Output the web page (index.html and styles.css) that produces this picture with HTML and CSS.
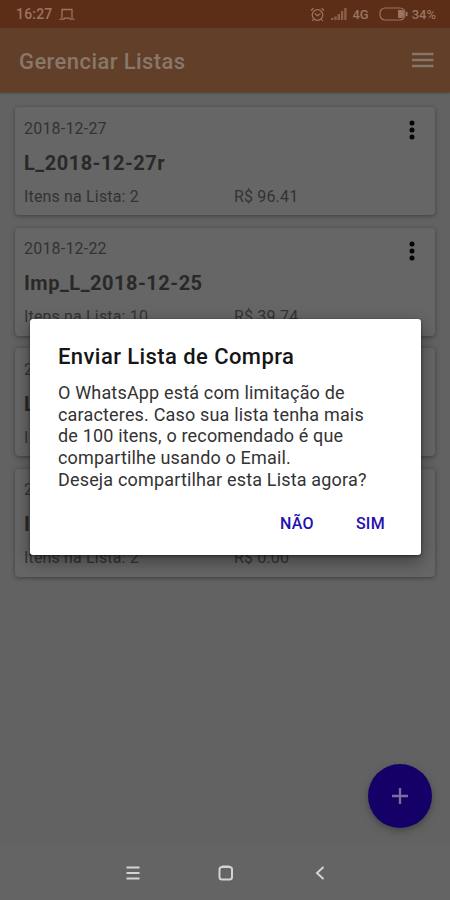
FILE: index.html
```html
<!DOCTYPE html>
<html lang="pt-BR">
<head>
<meta charset="utf-8">
<title>Gerenciar Listas</title>
<link rel="stylesheet" href="styles.css">
</head>
<body>
<div class="screen">
  <header class="status">
    <span class="clock">16:27</span>
    <svg class="laptop" width="16" height="13" viewBox="0 0 16 13"><path d="M3 10V1.500h10V10M.5 11.200h4.200l1-1h4.600l1 1h4.200"/></svg>
    <div class="indicators">
      <svg class="alarm" width="15" height="15" viewBox="0 0 15 15"><circle cx="7.500" cy="8" r="5.300"/><path d="M1 3.500 3.500 1.200M14 3.500 11.500 1.200M4.800 6.500l2.700 2.200 3-2.200M3.600 12.300l-1.300 1.500M11.400 12.300l1.300 1.500"/></svg>
      <svg class="signal" width="16" height="12" viewBox="0 0 16 12"><path d="M0 10h2.400v2H0zM3.300 8.500h2.400V12H3.300zM6.600 6H9V12H6.600zM9.900 3h2.400v9H9.900zM13.200 0h2.400v12h-2.400z"/></svg>
      <span class="network">4G</span>
      <svg class="battery" width="29" height="14" viewBox="0 0 29 14"><rect class="outline" x="1" y="1" width="25" height="12" rx="5"/><path class="charge" d="M19 3h4a3 3 0 0 1 2 3v2a3 3 0 0 1-2 3h-4zM27 5h1.500v4H27z"/></svg>
      <span class="percent">34%</span>
    </div>
  </header>
  <div class="appbar">
    <h1>Gerenciar Listas</h1>
    <svg width="22" height="16" viewBox="0 0 22 16"><path d="M0 2h21.500M0 8h21.500M0 14h21.500"/></svg>
  </div>
  <main class="lists">
    <article class="card">
      <div class="date">2018-12-27</div><h2>L_2018-12-27r</h2>
      <div class="totals"><span>Itens na Lista: 2</span><span>R$ 96.41</span></div>
      <svg class="more" width="6" height="20" viewBox="0 0 6 20"><circle cx="3" cy="3" r="2.500"/><circle cx="3" cy="10" r="2.500"/><circle cx="3" cy="17" r="2.500"/></svg>
    </article>
    <article class="card">
      <div class="date">2018-12-22</div><h2>Imp_L_2018-12-25</h2>
      <div class="totals"><span>Itens na Lista: 10</span><span>R$ 39.74</span></div>
      <svg class="more" width="6" height="20" viewBox="0 0 6 20"><circle cx="3" cy="3" r="2.500"/><circle cx="3" cy="10" r="2.500"/><circle cx="3" cy="17" r="2.500"/></svg>
    </article>
    <article class="card">
      <div class="date">2</div><h2>L</h2>
      <div class="totals"><span>I</span></div>
    </article>
    <article class="card">
      <div class="date">2</div><h2>I</h2>
      <div class="totals"><span>Itens na Lista: 2</span><span>R$ 0.00</span></div>
    </article>
  </main>
  <nav class="navbar">
    <svg width="14" height="14" viewBox="0 0 14 14"><path d="M.5 1.500h13M.5 7h13M.5 12.500h13"/></svg>
    <svg class="home" width="16" height="16" viewBox="0 0 16 16"><rect x="1.500" y="2" width="12.500" height="12.500" rx="2.500"/><path d="M4 1.500h7.500"/></svg>
    <svg width="10" height="14" viewBox="0 0 10 14"><path d="M8.500 1 2 7l6.500 6"/></svg>
  </nav>
  <div class="fab"><svg width="16" height="16" viewBox="0 0 16 16"><path d="M8 0v16M0 8h16"/></svg></div>
  <section class="dialog">
    <h3>Enviar Lista de Compra</h3>
    <p>O WhatsApp está com limitação de<br>caracteres. Caso sua lista tenha mais<br>de 100 itens, o recomendado é que<br>compartilhe usando o Email.<br>Deseja compartilhar esta Lista agora?</p>
    <div class="actions"><span>NÃO</span><span>SIM</span></div>
  </section>
</div>
</body>
</html>
```
FILE: styles.css
```css
* { box-sizing: border-box; }
body, h1, h2, h3, p { margin: 0; }
body { font-family: Roboto, "Liberation Sans", sans-serif; }
svg { fill: none; display: block; }
.screen {
  position: relative;
  width: 450px;
  height: 900px;
  overflow: hidden;
  background: #626262;
  display: flex;
  flex-direction: column;
}
.status {
  height: 28px;
  flex: none;
  padding: 0 15px 0 16px;
  background: #5c2e17;
  color: #9b7461;
  display: flex;
  align-items: center;
  font-size: 14px;
  font-weight: 500;
}
.clock { letter-spacing: .2px; }
.laptop { margin-left: 6px; stroke: #9b7461; stroke-width: 1.3; }
.indicators { margin-left: auto; display: flex; align-items: center; }
.alarm { stroke: #9b7461; stroke-width: 1.2; margin-right: 6px; }
.signal { fill: #8b604b; margin-right: 5px; }
.network { font-size: 13px; margin-right: 10px; }
.outline { stroke: #9b7461; stroke-width: 1.2; }
.charge { fill: #9b7461; }
.battery { margin-right: 4px; }
.percent { font-size: 13px; }
.indicators { margin-right: -1px; }
.appbar {
  height: 64px;
  flex: none;
  padding: 0 16px 0 19px;
  background: #613f28;
  display: flex;
  align-items: center;
  justify-content: space-between;
  box-shadow: 0 1px 2px #4c4039;
}
.appbar h1 { font-size: 22px; line-height: 28px; font-weight: 500; letter-spacing: .42px; color: #89776b; margin-top: 4px; }
.appbar svg { stroke: #85756a; stroke-width: 2.6; }
.lists { padding: 15px 15px 0; display: flex; flex-direction: column; gap: 12.500px; }
.card {
  position: relative;
  height: 108px;
  padding: 11.500px 9px 0;
  border-radius: 4px;
  background: #666;
  box-shadow: 0 1px 4px #404040;
  color: #333;
}
.date { font-size: 16px; line-height: 20px; letter-spacing: .2px; }
.card h2 { font-size: 20px; line-height: 24px; font-weight: 700; letter-spacing: .5px; margin-top: 12px; color: #292929; }
.totals { display: grid; grid-template-columns: 210px 1fr; font-size: 16px; line-height: 20px; letter-spacing: .16px; margin-top: 12px; }
.more { position: absolute; right: 20px; top: 13px; fill: #060606; }
.navbar {
  height: 54px;
  margin-top: auto;
  padding: 0 125px 0 126px;
  background: #646464;
  display: flex;
  align-items: center;
  justify-content: space-between;
}
.navbar svg { stroke: #d4d4d4; stroke-width: 2; }
.navbar .home { margin-right: 4px; }
.fab {
  position: absolute;
  right: 18px;
  top: 764px;
  width: 64px;
  height: 64px;
  border-radius: 50%;
  background: #150067;
  box-shadow: 0 3px 7px #454545;
  display: grid;
  place-items: center;
}
.fab svg { stroke: #77709a; stroke-width: 2.3; }
.dialog {
  position: absolute;
  left: 30px;
  top: 319px;
  width: 391px;
  height: 236px;
  padding: 24px 28px 0;
  border-radius: 3px;
  background: #fff;
  box-shadow: 0 6px 18px rgba(0, 0, 0, .4), 0 1px 3px rgba(0, 0, 0, .5);
  color: #161616;
}
.dialog h3 { font-size: 22px; line-height: 28px; font-weight: 500; letter-spacing: .42px; }
.dialog p { font-size: 18px; line-height: 21.700px; letter-spacing: .17px; margin-top: 11px; white-space: nowrap; color: #333; }
.actions { display: flex; justify-content: flex-end; gap: 42px; margin: 22px 8px 0 0; color: #2410ad; font-size: 16px; line-height: 22px; font-weight: 500; letter-spacing: .3px; }
```
